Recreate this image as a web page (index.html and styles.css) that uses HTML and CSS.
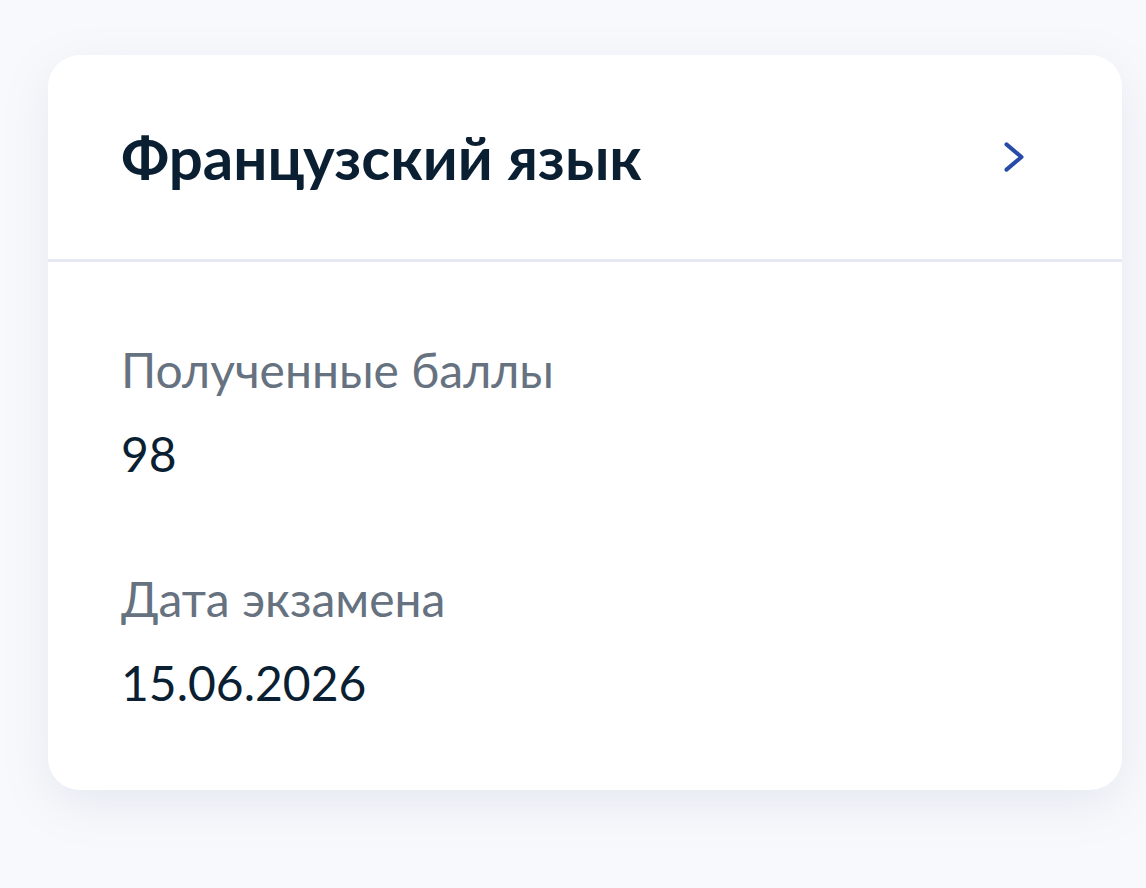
FILE: index.html
```html
<!DOCTYPE html>
<html lang="ru">
<head>
    <meta charset="UTF-8">
    <meta name="viewport" content="width=device-width, initial-scale=1.0">
    <title>Результаты экзамена</title>
    <link rel="stylesheet" href="styles.css">
</head>
<body>
    <div class="exam-card">
        <a class="exam-header" href="#">
            <h2 class="exam-title">Французский язык</h2>
            <span class="exam-arrow">
                <svg viewBox="0 0 24 24" width="72" height="72" fill="none">
                    <path d="M9.5 7.8L14.5 12L9.5 16.2" stroke="#274ba6" stroke-width="1.35" stroke-linecap="round" stroke-linejoin="round"/>
                </svg>
            </span>
        </a>

        <div class="exam-body">
            <div class="exam-field">
                <div class="field-label">Полученные баллы</div>
                <div class="field-value">98</div>
            </div>
            <div class="exam-field">
                <div class="field-label">Дата экзамена</div>
                <div class="field-value">15.06.2026</div>
            </div>
        </div>
    </div>
</body>
</html>
```

FILE: styles.css
```css
body {
    font-family: 'Lato', 'Noto Sans', sans-serif;
    margin: 0;
    padding: 55px 24px 0 48px;
    background: #f8f9fc;
    min-height: 100vh;
    box-sizing: border-box;
}
.exam-card {
    width: 1074px;
    background: #ffffff;
    border-radius: 32px;
    box-shadow: 0 14px 48px rgba(104, 120, 170, 0.13);
    overflow: hidden;
}
.exam-header {
    display: flex;
    align-items: center;
    justify-content: space-between;
    height: 204px;
    padding: 0 72px 0 73px;
    border-bottom: 3px solid #e6e9f3;
    text-decoration: none;
}
.exam-title {
    margin: 0;
    font-size: 60px;
    font-weight: 700;
    line-height: 1.2;
    color: #0b1f33;
}
.exam-arrow {
    display: flex;
    width: 72px;
    height: 72px;
}
.exam-body {
    padding: 72px 73px 71px;
}
.exam-field + .exam-field {
    margin-top: 73px;
}
.field-label {
    font-size: 48px;
    line-height: 72px;
    color: #66727f;
}
.field-value {
    margin-top: 12px;
    font-size: 48px;
    line-height: 72px;
    color: #0b1f33;
}
```
